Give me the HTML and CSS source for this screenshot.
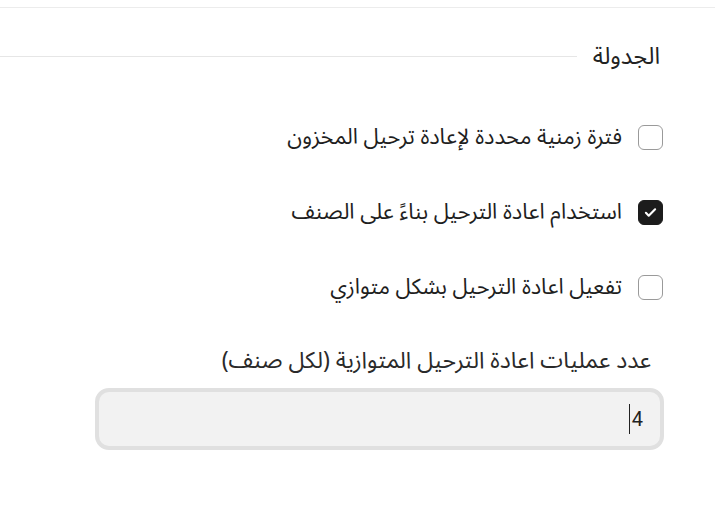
FILE: index.html
```html
<!DOCTYPE html>
<html lang="ar" dir="rtl">
<head>
<meta charset="utf-8">
<link rel="stylesheet" href="styles.css">
</head>
<body>
<div class="topline"></div>
<section class="group">
  <div class="legend">
    <span class="legend-text">الجدولة</span>
    <span class="legend-line"></span>
  </div>
  <div class="options">
    <label class="opt"><span class="box"></span><span class="opt-text">فترة زمنية محددة لإعادة ترحيل المخزون</span></label>
    <label class="opt"><span class="box checked"><svg viewBox="0 0 24 24" width="17" height="17"><path d="M5.5 12.5l4 4 9-9" fill="none" stroke="#fff" stroke-width="3" stroke-linecap="round" stroke-linejoin="round"/></svg></span><span class="opt-text">استخدام اعادة الترحيل بناءً على الصنف</span></label>
    <label class="opt"><span class="box"></span><span class="opt-text">تفعيل اعادة الترحيل بشكل متوازي</span></label>
  </div>
  <div class="field">
    <div class="field-label">عدد عمليات اعادة الترحيل المتوازية (لكل صنف)</div>
    <div class="input"><span class="val">4</span><span class="caret"></span></div>
  </div>
</section>
</body>
</html>
```
FILE: styles.css
```css
html, body {
  margin: 0;
  padding: 0;
  background: #fff;
}
body {
  font-family: "Noto Sans Arabic", "Noto Sans Arabic UI", "Noto Sans", sans-serif;
  color: #222;
  width: 715px;
  height: 506px;
  overflow: hidden;
}
.topline {
  margin-top: 7px;
  height: 1px;
  background: #ececec;
}
.group {
  padding-top: 34px;
}
.legend {
  display: flex;
  align-items: center;
  padding-right: 55px;
}
.legend-text {
  font-size: 23.5px;
  line-height: 30px;
  margin-left: 16px;
}
.legend-line {
  flex: 1;
  height: 1px;
  background: #e6e6e6;
  margin-bottom: 2px;
}
.options {
  display: flex;
  flex-direction: column;
  gap: 45px;
  padding-top: 50px;
  padding-right: 52px;
}
.opt {
  display: flex;
  align-items: center;
  gap: 16px;
  height: 30px;
}
.box {
  width: 23px;
  height: 23px;
  border: 1.5px solid #9a9a9a;
  border-radius: 6px;
  display: flex;
  align-items: center;
  justify-content: center;
  background: #fff;
}
.box.checked {
  background: #1c1c1c;
  border-color: #1c1c1c;
}
.opt-text {
  font-size: 21.8px;
  line-height: 30px;
  color: #1e1e1e;
}
.field {
  padding: 44px 51px 0 0;
  width: 569px;
}
.field-label {
  font-size: 23px;
  line-height: 30px;
  color: #2a2a2a;
  padding-right: 13px;
  margin-bottom: 12px;
}
.input {
  height: 54px;
  border: 4px solid #e0e0e0;
  border-radius: 14px;
  background: #f2f2f2;
  display: flex;
  align-items: center;
  padding-right: 17px;
  gap: 2px;
  box-sizing: content-box;
}
.caret {
  width: 1px;
  height: 30px;
  background: #222;
}
.val {
  font-family: Roboto, "Noto Sans", sans-serif;
  font-size: 20px;
  color: #222;
  direction: ltr;
}
```
